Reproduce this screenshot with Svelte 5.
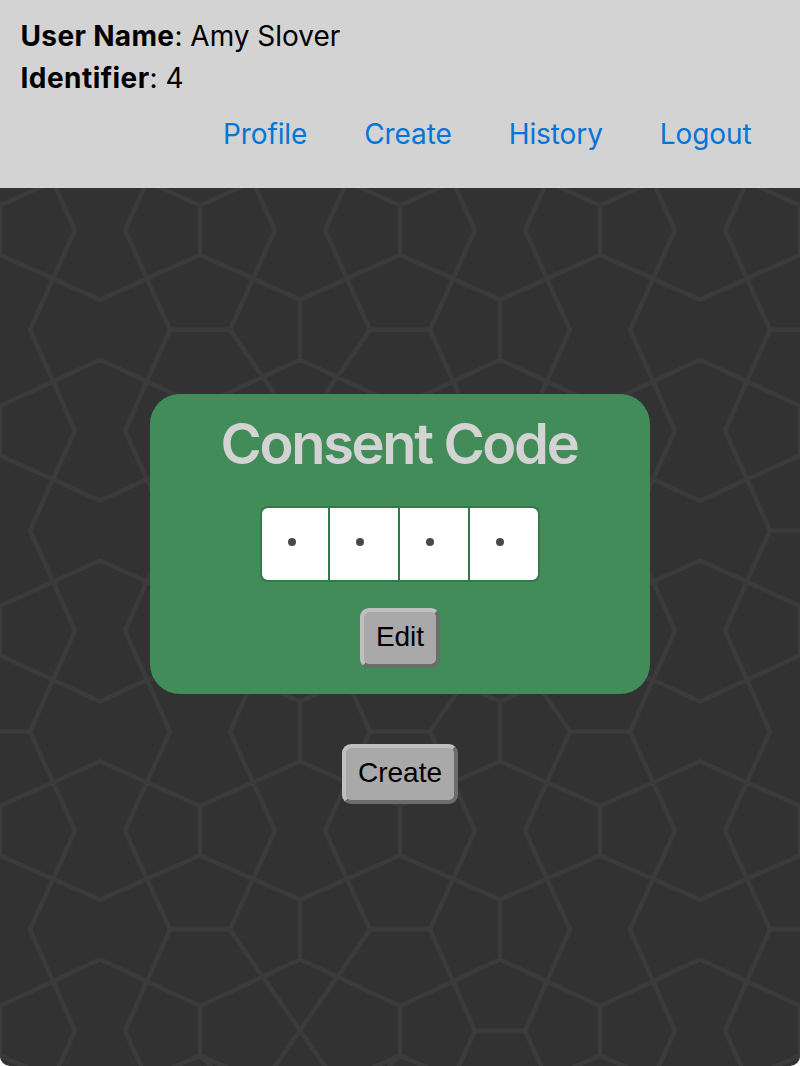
<script>
  const links = ['Profile', 'Create', 'History', 'Logout'];

  // Pentagon lattice: "narrow" rows hold the short uprights, "wide" rows the long ones.
  const narrow = [30, 230, 430.5, 630.5, 830.5, 1030.5, 1230];
  const wide = [130, 329.7, 530.5, 731.5, 929.5, 1130];
  // Uprights between chevrons and level bars, per wide row.
  const uprights = [[], [300, 500], [], [300, 500], [300, 500], []];
  const bars = [[], [200, 400, 800], [800], [0, 400, 600], [200, 400, 800], []];
  // Places where the sides meet in an X on a narrow row.
  const crosses = { 2: [300], 3: [500], 5: [300] };

  const lines = [];
  const add = (...p) => lines.push('M' + p.join(' '));
  const side = (row, x, dir) => ((crosses[row] || []).includes(x) ? x : x + dir * 25);

  narrow.forEach((y) => {
    for (let x = 0; x <= 800; x += 200) add(x, y - 24.5, x, y + 25);
  });
  wide.forEach((y, i) => {
    const above = narrow[i];
    const below = narrow[i + 1];
    for (let x = 100; x < 800; x += 200) {
      add(x - 100, above + 25, x, y - 30, x + 100, above + 25);
      add(x - 100, below - 24.5, x, y + 30, x + 100, below - 24.5);
      for (const d of [-1, 1]) {
        // Below an X the strokes carry on outwards, swapping sides.
        add(side(i, x, d), above, x + d * 70, y, side(i + 1, x, d), below);
      }
    }
    uprights[i].forEach((x) => add(x, y - 30, x, y + 30));
    bars[i].forEach((x) => add(x - 30, y, x + 30, y));
  });
  add(475, 1030.5, 525, 1030.5);
  add(200, 1055.5, 230, 1086);
  add(400, 1055.5, 370, 1086);
  const lattice = lines.join('');
</script>

<div class="page">
  <svg class="lattice" viewBox="0 0 800 1066" aria-hidden="true"><path d={lattice} /></svg>
  <header>
    <div class="line name"><b>User Name</b>: Amy Slover</div>
    <div class="line ident"><b>Identifier</b>: 4</div>
    <nav>
      {#each links as link}<a href="#{link.toLowerCase()}">{link}</a>{/each}
    </nav>
  </header>
  <main>
    <section>
      <h1>Consent Code</h1>
      <div class="pin">
        {#each [0, 1, 2, 3] as i}<div class="cell"><i></i></div>{/each}
      </div>
      <button class="edit">Edit</button>
    </section>
    <button class="create">Create</button>
  </main>
</div>

<style>
  :global(body) { margin: 0; background: #fff; }
  .page {
    position: relative;
    width: 800px;
    height: 1066px;
    overflow: hidden;
    background: #323232;
    border-radius: 0 0 10px 10px;
    font-family: Inter, "Liberation Sans", sans-serif;
    font-feature-settings: "calt" 0;
  }
  .lattice { position: absolute; inset: 0; width: 800px; height: 1066px; }
  .lattice path { fill: none; stroke: #3b3b3b; stroke-width: 4.6; }
  header {
    position: relative;
    box-sizing: border-box;
    height: 188px;
    padding: 15px 20px 0;
    background: #d3d3d3;
    color: #000;
    font-size: 28px;
    line-height: 42px;
  }
  .line { height: 42px; padding-left: 0.5px; white-space: nowrap; }
  .name b { letter-spacing: 0.35px; }
  .ident b { letter-spacing: 0.45px; }
  b { font-weight: 700; }
  nav {
    display: flex;
    justify-content: flex-end;
    gap: 57px;
    padding: 14px 28.5px 0 0;
  }
  a { color: #0275d8; text-decoration: none; letter-spacing: -0.1px; }
  main {
    position: relative;
    display: flex;
    flex-direction: column;
    align-items: center;
    padding-top: 206px;
  }
  section {
    box-sizing: border-box;
    display: flex;
    flex-direction: column;
    align-items: center;
    width: 500px;
    height: 300px;
    padding-top: 19px;
    border-radius: 30px;
    background: #428c5a;
  }
  h1 {
    margin: 0 0 31px;
    padding-right: 2px;
    color: #d3d3d3;
    font-size: 56px;
    line-height: 62px;
    font-weight: 600;
    letter-spacing: -2.35px;
    white-space: nowrap;
  }
  .pin {
    box-sizing: border-box;
    display: flex;
    width: 280px;
    height: 76px;
    border: 2px solid #35784c;
    border-radius: 8px;
    background: #fff;
    overflow: hidden;
  }
  .cell {
    box-sizing: border-box;
    width: 70px;
    padding: 30px 0 0 26px;
    border-right: 2px solid #35784c;
  }
  .cell:first-child { width: 68px; }
  .cell:last-child { width: 68px; border-right: 0; }
  i { display: block; width: 8px; height: 8px; border-radius: 50%; background: #464a4c; }
  button {
    box-sizing: border-box;
    height: 60px;
    padding: 0 0 2px;
    border: 4px solid;
    border-color: #c0c0c0 #6c6c6c #6c6c6c #c0c0c0;
    border-radius: 9px;
    background: #a9a9a9;
    color: #000;
    font: 28px/48px "Liberation Sans", Arial, sans-serif;
  }
  .edit { width: 80px; margin-top: 26px; }
  .create { width: 116px; margin-top: 50px; }
</style>
